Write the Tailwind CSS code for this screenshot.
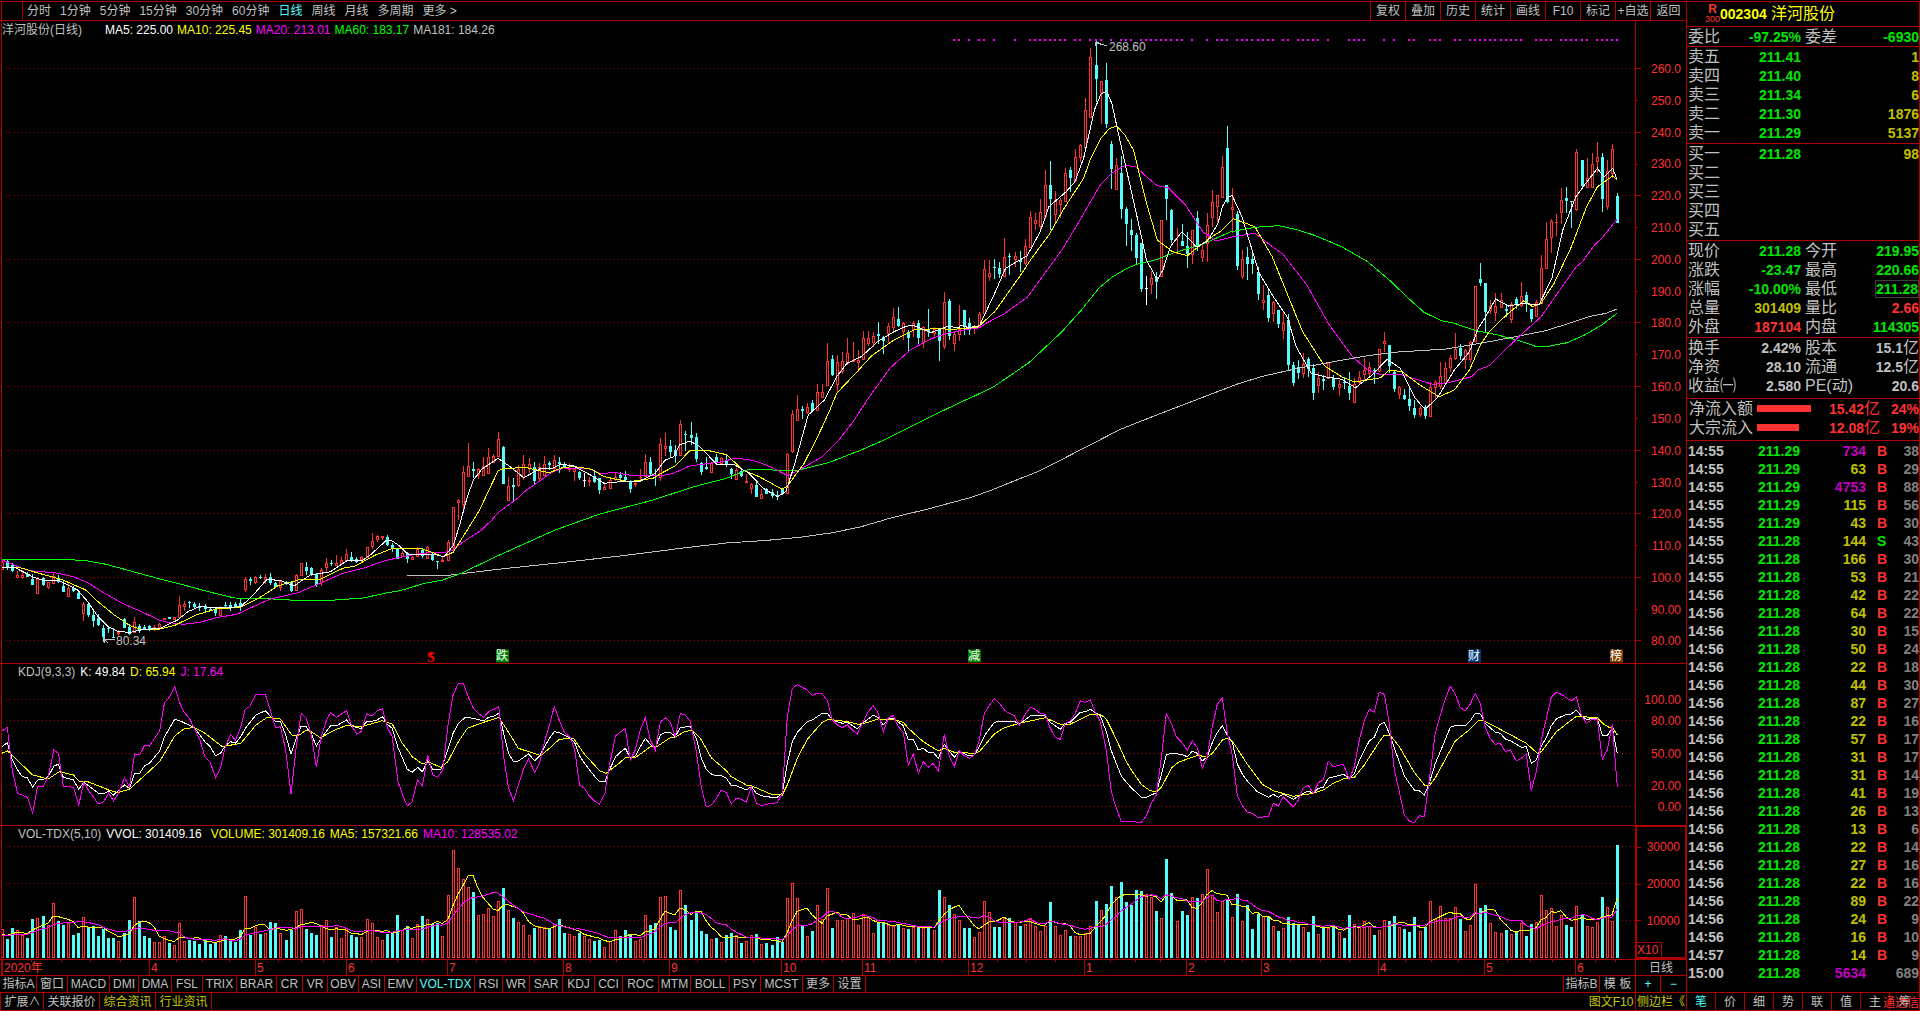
<!DOCTYPE html>
<html lang="zh-CN">
<head>
<meta charset="utf-8">
<meta name="viewport" content="width=device-width, initial-scale=1">
<title>洋河股份 日线</title>
<script src="https://cdn.jsdelivr.net/npm/@tailwindcss/browser@4"></script>
</head>
<body class="bg-black text-[#c0c0c0] font-['Liberation_Sans','Noto_Sans_CJK_SC',sans-serif] text-xs leading-none">
<div class="flex min-h-screen w-full pt-px">

  <!-- chart area -->
  <main class="flex min-w-0 flex-1 flex-col whitespace-nowrap">
    <nav class="flex h-5 items-stretch justify-between border-y border-[#b00000]" aria-label="周期">
      <div class="flex">
        <div class="ml-px w-[22px] border-x border-[#b00000]"></div>
        <div class="flex items-center gap-[9px] pl-1">
          <button>分时</button><button>1分钟</button><button>5分钟</button><button>15分钟</button><button>30分钟</button><button>60分钟</button><button class="text-[#54fcfc]">日线</button><button>周线</button><button>月线</button><button>多周期</button><button>更多 &gt;</button>
        </div>
      </div>
      <div class="grid w-[316px] grid-cols-[repeat(8,35px)_1fr] [&>button]:border-l [&>button]:border-[#b00000]">
        <button>复权</button><button>叠加</button><button>历史</button><button>统计</button><button>画线</button><button>F10</button><button>标记</button><button>+自选</button><button>返回</button>
      </div>
    </nav>

    <section class="flex min-h-80 flex-1">
      <div class="relative ml-px min-w-0 flex-1 border-l border-[#b00000]">
        <svg id="price" class="absolute inset-0 h-full w-full" viewBox="2 21 1633 642" preserveAspectRatio="none" shape-rendering="crispEdges" fill="none"></svg>
        <div id="priceMarks"></div>
        <div class="relative flex gap-1 pt-[3px]">
          <span class="w-[99px]">洋河股份(日线)</span>
          <span class="text-white">MA5: 225.00</span><span class="text-[#ffff00]">MA10: 225.45</span><span class="text-[#ff00ff]">MA20: 213.01</span><span class="text-[#00ff00]">MA60: 183.17</span><span>MA181: 184.26</span>
        </div>
      </div>
      <div id="priceAxis" class="relative w-[51px] border-l border-[#b00000] text-[#ff3232]"></div>
    </section>

    <section class="flex h-[162px] border-t border-[#b00000]">
      <div class="relative ml-px min-w-0 flex-1 border-l border-[#b00000]">
        <svg id="kdj" class="absolute inset-0 h-full w-full" viewBox="2 664 1633 161" preserveAspectRatio="none" shape-rendering="crispEdges" fill="none"></svg>
        <div class="relative flex gap-[5px] pl-4 pt-[2px]">
          <span>KDJ(9,3,3)</span><span class="text-white">K: 49.84</span><span class="text-[#ffff00]">D: 65.94</span><span class="text-[#ff00ff]">J: 17.64</span>
        </div>
      </div>
      <div id="kdjAxis" class="relative w-[51px] border-l border-[#b00000] text-[#ff3232]"></div>
    </section>

    <section class="flex h-[134px] border-t border-[#b00000]">
      <div class="relative ml-px min-w-0 flex-1 border-l border-[#b00000]">
        <svg id="vol" class="absolute inset-0 h-full w-full" viewBox="2 826 1633 133" preserveAspectRatio="none" shape-rendering="crispEdges" fill="none"></svg>
        <div class="relative flex gap-[5px] pl-4 pt-[2px]">
          <span>VOL-TDX(5,10)</span><span class="text-white">VVOL: 301409.16</span><span class="pl-1 text-[#ffff00]">VOLUME: 301409.16</span><span class="text-[#ffff00]">MA5: 157321.66</span><span class="text-[#ff00ff]">MA10: 128535.02</span>
        </div>
      </div>
      <div id="volAxis" class="relative w-[51px] border-2 border-r border-t-1 border-[#b00000] text-[#ff3232]">
        <span class="absolute bottom-0 left-0 border-r border-t border-[#b00000] pb-px pr-[3px] pt-px">X10</span>
      </div>
    </section>

    <div class="flex h-4 border-t border-[#b00000]">
      <div id="dates" class="relative ml-px min-w-0 flex-1 border-l border-[#b00000] text-[#ff3232]"></div>
      <button class="w-[51px] border-l border-[#b00000]">日线</button>
    </div>

    <nav class="flex h-[17px] border-t border-[#b00000]" aria-label="指标">
      <div id="indicators" class="flex min-w-0 flex-1 pl-px"></div>
      <div class="flex [&>button]:border-l [&>button]:border-[#b00000]">
        <button class="w-9">指标B</button><button class="w-9">模 板</button><button class="w-[25px] text-[#54fcfc]">+</button><button class="w-[26px] text-[#54fcfc]">−</button>
      </div>
    </nav>

    <nav class="flex h-[19px] justify-between border-y border-[#b00000]" aria-label="资讯">
      <div class="flex border-l border-[#b00000] pl-px [&>button]:border-r [&>button]:border-[#b00000]">
        <button class="w-[42px]">扩展∧</button><button class="w-14">关联报价</button><button class="w-14 text-[#c8c800]">综合资讯</button><button class="w-14 text-[#c8c800]">行业资讯</button>
      </div>
      <div class="flex text-[#c8c800]">
        <button class="w-12">图文F10</button><button class="w-[51px] overflow-hidden border-l border-[#b00000] pl-px text-left">侧边栏《</button>
      </div>
    </nav>
  </main>

  <!-- quote panel -->
  <aside class="flex w-[234px] flex-col border border-[#b00000] text-sm leading-none font-bold">
    <header class="flex h-6 items-center pl-[18px] text-[#ffff00]">
      <div class="flex w-[15px] flex-col items-center text-[#ff3232]"><span class="text-xs leading-[11px]">R</span><span class="text-[9px] leading-[9px] font-normal">300</span></div>
      <span class="w-[51px]">002304</span><h1 class="text-base leading-none font-normal">洋河股份</h1>
    </header>
    <div id="quotes"></div>
    <section class="border-t border-[#b00000] pb-[3px] text-[#ff3232]">
      <div class="flex h-[19px] items-center pl-[2px]"><span class="w-[68px] text-base leading-none font-normal text-[#c0c0c0]">净流入额</span><span class="h-[7px] w-[54px] bg-[#ff3232]"></span><span class="ml-auto">15.42<span class="text-base leading-none font-normal">亿</span></span><span class="w-[39px] text-right">24%</span></div>
      <div class="flex h-[19px] items-center pl-[2px]"><span class="w-[68px] text-base leading-none font-normal text-[#c0c0c0]">大宗流入</span><span class="h-[7px] w-[42px] bg-[#ff3232]"></span><span class="ml-auto">12.08<span class="text-base leading-none font-normal">亿</span></span><span class="w-[39px] text-right">19%</span></div>
    </section>
    <div class="flex-1 border-t border-[#b00000] pt-px">
      <table class="w-full table-fixed">
        <colgroup><col class="w-[50px]"><col class="w-[63px]"><col class="w-[66px]"><col class="w-[24px]"><col></colgroup>
        <tbody id="ticks"></tbody>
      </table>
    </div>
    <nav class="relative grid h-[18px] grid-cols-[28px_repeat(6,29px)_1fr] border-t border-[#b00000] text-xs leading-none font-normal [&>button+button]:border-l [&>button+button]:border-[#b00000]" aria-label="明细">
      <button class="text-[#54fcfc]">笔</button><button>价</button><button>细</button><button>势</button><button>联</button><button>值</button><button>主</button><button>筹</button>
      <a href="#" class="absolute bottom-px right-0 text-[#ff3232]">通达信</a>
    </nav>
  </aside>
</div>

<script>
const RED = '#ff3232', CYAN = '#54fcfc', LINE = '#b00000';
const $ = id => document.getElementById(id);
const COUNT = 320, STEP = 1615 / 319;
const barX = i => Math.round(2.5 + i * STEP - .5);

// Candles: colour (r rise, c fall, w flat), high, low, body top, body bottom in thirds of a pixel below y
const candleData = [
 {y:480, d:`r238,270,245,268 c240,270,243,262 c250,277,255,274 r272,292,285,290 r270,297,286,290 c276,290,283,290 c283,316,297,315 r290,340,296,338 c290,317,295,315 r305,328,307,320 r277,312,288,310 c285,310,295,305 c300,336,318,335 r310,350,325,349 c318,335,325,332 c335,357,340,356 r365,422,372,398 c368,410,372,405 c388,440,406,424 c403,437,415,435 c435,485,445,472 c438,458,443,448 c445,473,471,473 r450,468,455,458 c415,445,418,443 c432,465,440,462 r412,460,426,455 c432,460,437,452 c435,450,440,447 c434,452,438,448 r436,452,442,448 r430,445,432,440 r413,420,415,418 c410,418,412,417 r410,418,412,417 r348,413,375,412 r364,392,372,378 c362,385,366,370 c367,383,373,380 c370,394,378,384 c372,397,380,386 c384,392,386,390 c385,408,388,400 r377,408,380,405 c365,380,374,378 c366,392,375,380 c365,385,372,380 c358,393,368,382 r290,337,298,328 c290,315,298,302 r287,312,290,307 c285,297,291,295 r283,312,292,296 c280,315,290,310 c305,323,308,321 r300,333,303,320 c303,315,307,310 c302,335,307,332 r283,332,286,330 r248,288,250,284 c245,285,262,272 c262,288,265,282 c278,320,282,316 r265,318,270,305 r235,275,248,262 c240,258,250,253 r225,258,250,254 r232,252,240,248 r207,245,222,240 c216,245,230,242 c230,248,236,245 r228,245,232,238 r200,235,202,232 r158,207,182,198 r165,185,168,178 r168,180,169,172 c165,198,170,195 c188,215,196,206 c204,237,206,236`},
 {y:300, d:`r752,772,758,768 c755,790,758,778 r768,780,770,776 r740,770,748,768 c745,775,750,768 r737,777,740,775 c758,783,765,780 c783,808,783,786 r770,785,781,784 r720,782,726,780 r620,752,622,740 r597,660,600,605 r497,632,517,612 r430,530,498,528 c487,535,506,512 r503,537,507,522 r470,527,497,525 r445,520,470,518 r463,488,468,485 r395,470,418,468 c437,552,440,551 r532,603,558,601 c535,607,555,560 r495,560,508,555 r465,540,492,530 r475,520,492,505 c487,555,500,542 r490,545,502,533 r468,527,492,525 c482,510,490,495 r465,510,480,505 c470,520,485,492 c487,505,493,500 r490,515,503,508 r503,543,508,512 c512,540,516,535 w520,560,540,541 r530,558,540,542 c515,550,528,545 c533,583,535,570 r545,570,562,567 r537,567,540,563 r520,543,530,538 c515,540,526,535 c512,547,530,540 c540,580,545,568 r545,560,548,553 r507,545,530,532 r463,530,487,527 c472,527,487,522 c507,558,525,528 r415,543,432,530 r400,467,438,445 c420,470,438,455 c435,488,450,467 r360,467,373,466 c392,452,403,405 c367,435,405,415 c400,487,411,478 c487,525,490,517 c470,510,500,507 r487,520,490,517 c463,490,470,487 r470,492,475,488 c463,502,480,496 c503,537,507,521 r505,537,510,536 c510,530,513,527 r522,550,543,545 r548,582,552,565 c543,590,555,590 r568,595,582,593 c563,583,567,582 c568,595,577,588 c573,600,585,588 c563,585,567,583 r458,583,461,580 r330,458,343,452 r285,362,328,360 c318,357,328,332 r308,342,322,335 c300,335,310,332 r252,333,277,330 r252,295,277,290 r128,255,184,254 c165,228,177,225 r165,275,187,252 r155,222,184,213 r113,195,160,190 r127,187,180,184 r150,215,180,187 r93,180,115,178 r93,138,115,128 r97,140,107,127 c67,133,102,108 c107,162,112,123 r70,127,78,98 r23,97,52,80 c22,80,57,77 r67,120,70,92 c90,153,97,115 r63,110,70,88 c60,132,69,113 r78,145,82,125 c28,112,88,95 r82,115,87,100 c87,182,90,122 r-25,147,7,137 c-2,120,2,107 r95,152,102,130 r15,122,88,103`},
 {y:30, d:`c840,915,840,892 c865,915,880,897 r885,912,888,895 r845,890,853,885 r690,852,717,850 r690,752,730,738 c687,748,711,714 c695,743,713,732 r625,740,682,738 c668,735,678,681 r665,712,678,688 c662,725,690,697 r628,705,648,700 r543,655,560,650 r550,600,570,578 r507,598,545,587 r420,567,466,558 c393,600,465,507 r483,575,510,553 r503,563,510,522 r413,515,430,512 c412,487,420,443 r357,455,382,450 r343,395,346,382 r205,360,241,350 r53,265,82,260 c30,215,105,147 r153,282,154,185 c98,293,150,282 c333,477,342,417 r383,480,406,478 c378,567,430,537 c532,648,537,582 c567,662,600,615 c610,703,615,683 c640,787,640,777 w737,825,775,776 r723,792,745,763 c727,808,742,755 r570,738,571,737 c465,570,465,507 c537,640,540,630 r595,672,668,670 c583,645,633,648 c605,713,648,672 r600,703,601,673 c543,662,563,650 r640,697,660,682 r550,697,586,640 r480,592,517,560 r495,577,496,527 r378,505,412,502 c288,520,354,515 r473,608,532,536 c543,720,552,708 r660,748,688,737 c650,750,682,702 c670,732,688,702 c710,810,725,792 r765,840,810,815 c778,877,795,863 r813,875,817,848 c840,895,840,882 r843,927,880,900 c853,1020,870,1005 c997,1068,1005,1058 c990,1048,1010,1030 r968,1045,1002,1030 c980,1040,987,1018 c1003,1110,1013,1088 r1027,1090,1043,1065 c1035,1080,1048,1053 r995,1047,1000,1043 c1035,1080,1043,1072 r1050,1097,1063,1070 c1040,1077,1055,1060 c1027,1110,1067,1088 r1045,1118,1062,1115 r1022,1065,1040,1055 r983,1050,1020,1032 r995,1037,1010,1030 c1015,1062,1020,1023 r957,1025,958,1022 r907,967,934,938 c945,1030,946,1008 c1020,1087,1025,1077 r1067,1107,1070,1092 c1078,1110,1095,1107 c1075,1143,1107,1128 c1110,1163,1133,1155 r1127,1160,1135,1153 c1125,1167,1130,1157 r1057,1160,1070,1158 r1050,1108,1055,1070 r997,1077,1038,1068 r995,1065,1015,1060 r975,1027,984,1010 r908,990,958,985 c943,990,953,978 r957,1017,960,987 r933,997,937,986 r767,935,769,933 c698,767,747,760 c760,907,760,847 r810,853,827,840 r790,873,828,845 r790,835,810,832 c822,860,838,842 r817,880,823,867 c800,837,808,822 r757,832,798,825 c785,845,795,818 c837,875,838,867 r810,858,815,857 r675,820,715,818 r575,715,628,713 r567,668,574,620 r553,617,575,577 r473,582,511,545 c470,548,505,513 c513,595,513,515 r357,543,367,536 c390,477,390,468 r383,472,445,470 r370,475,402,472 r337,430,382,392 c370,547,380,507 r390,540,422,527 r343,445,358,430 c490,578,498,578`}
];
const candles = candleData.flatMap(s => s.d.split(' ').map(t => {
  const [h, l, a, b] = t.slice(1).split(',').map(v => Math.round(s.y + v / 3));
  return {c: t[0], h, l, a, b};
}));

// Volume bar tops, in thirds of a pixel below y
const volData = [
 {y:820, d:'328 357 324 331 345 353 297 295 289 315 250 303 315 308 346 340 292 322 318 348 327 354 354 362 338 300 232 303 349 354 367 367 349 369 376 310 364 360 363 372 360 373 370 346 348 360 367 331 229 344 320 342 340 306 309 340 360 331 274 268 328 339 346 316 300 351 320 354 325 346 351 352 297 310 352 361 342 338 285 330 318 354 312 288 297 312 309 349 226 91 145 178 202 216 286 283 265 289 244 204 271 293 307 316 346 324 318 322 328 313 297 340 342 348 338 347 357 362 360 381 363 331'},
 {y:670, d:'798 780 793 814 808 736 765 759 682 679 771 780 661 705 750 727 783 792 808 804 817 795 789 796 819 814 796 792 823 819 825 801 816 685 640 685 768 799 783 706 748 655 774 750 750 745 730 766 733 742 790 760 760 765 768 762 775 777 772 772 775 775 780 660 682 705 733 750 774 774 802 787 694 727 771 771 745 744 757 768 763 745 769 784 768 696 768 796 781 798 799 799 790 769 693 721 702 648 682 636 696'},
 {y:640, d:'795 750 753 763 772 813 835 657 759 844 813 825 772 774 763 688 766 817 784 777 832 762 844 795 867 822 829 828 859 873 865 831 849 856 862 876 828 883 865 865 856 877 894 825 853 862 844 858 885 871 841 843 828 862 867 876 831 874 862 784 838 799 835 835 802 837 874 856 733 804 795 850 877 880 870 883 877 850 888 852 847 766 811 805 859 826 855 861 799 822 859 862 847 771 802 844 615'}
];
const vols = volData.flatMap(s => s.d.split(' ').map(v => Math.round(s.y + v / 3)));

// Curves: x, y pairs relative to a block origin; k is the block's horizontal resolution
const A = {x:0, y:480, k:2.45}, B = {x:400, y:300, k:2.45}, C = {x:960, y:30, k:2.306}, D = {x:620, y:670, k:3}, E = {x:1130, y:640, k:3};
const curve = (color, ...parts) => {
  let pts = [];
  for (let i = 0; i < parts.length; i += 2) {
    const o = parts[i];
    pts.push(...parts[i + 1].split(' ').map(p => { const [x, y] = p.split(','); return (o.x + x / o.k).toFixed(1) + ',' + (o.y + y / 3).toFixed(1); }));
  }
  return `<polyline points="${pts.join(' ')}" stroke="${color}"/>`;
};
const grid = ys => ys.map(y => `<path d="M6 ${y + .5}H1635" stroke="${LINE}" stroke-dasharray="1 3"/>`).join('');
const solid = (x, y, w, h, f) => `<rect x="${x}" y="${y}" width="${w}" height="${Math.max(1, h)}" fill="${f}"/>`;
const hollow = (x, y, w, h) => h < 3 ? solid(x, y, w, h, RED) : `<rect x="${x + .5}" y="${y + .5}" width="${w - 1}" height="${h - 1}" stroke="${RED}" fill="#000"/>`;

const gridPrice = [68, 132, 195, 259, 322, 386, 450, 513, 577, 640];
let out = grid(gridPrice);
candles.forEach((k, i) => {
  const x = barX(i), col = k.c === 'r' ? RED : k.c === 'c' ? CYAN : '#fff';
  out += solid(x, k.h, 1, k.l - k.h, col);
  if (k.c === 'r') out += hollow(x - 1, k.a, 3, k.b - k.a + 1);
  else if (k.c === 'c') out += solid(x - 1, k.a, 3, k.b - k.a, col);
  else out += solid(x - 1, k.a, 3, 1, col);
});
out += curve('#c0c0c0', B, '18,827 110,827 240,808 380,790 540,768 700,743 800,729 900,721 980,712 1060,698 1130,680 1200,655 1300,625 1400,592 1450,570 1500,545 1568,512', C, '370,1198 440,1162 500,1132 560,1102 640,1062 700,1038 780,1015 870,993 940,977 1000,967 1120,957 1200,940 1290,918 1350,902 1400,882 1450,860 1490,850 1515,837');
out += curve('#00ff00', A, '5,238 160,238 215,243 260,253 300,266 380,293 450,315 520,338 575,354 640,355 710,360 820,360 890,354 950,338', B, '0,872 60,850 105,840 150,820 240,767 380,690 490,642 620,600 720,560 800,535 850,510 900,508 935,513 975,511 1050,488 1130,450 1190,418 1300,350', C, '1,1117 30,1100 78,1070 120,1033 160,997 235,905 280,840 320,775 350,742 385,715 410,702 450,690 490,670 560,642 625,605 680,592 735,587 780,600 820,617 880,650 940,695 990,750 1030,800 1070,847 1110,872 1140,880 1190,902 1240,915 1290,932 1325,948 1360,948 1400,938 1440,915 1480,885 1515,850');
out += curve('#ff00ff', A, '5,240 60,268 90,275 130,277 180,290 215,308 250,335 300,370 350,397 390,420 410,427 450,433 490,427 530,413 580,403 620,380 660,358 730,338 780,312 840,280 890,265 940,243', B, '0,772 40,763 75,757 110,757 130,750 150,730 200,690 225,660 240,638 285,598 310,570 340,545 370,518 400,504 460,505 490,520 530,518 570,527 640,527 670,520 710,498 790,485 820,475 850,478 880,487 910,502 950,527 985,505 1035,470 1075,420 1110,365 1150,290 1200,205 1250,150 1300,117 1340,100', C, '1,902 45,893 60,880 100,853 155,802 235,660 270,585 300,517 325,462 350,430 380,406 405,410 430,440 455,467 480,473 520,525 560,605 590,633 630,620 680,610 715,645 745,673 770,715 800,765 850,882 905,980 940,1020 965,1032 1020,1035 1090,1063 1120,1060 1180,1040 1195,1020 1220,1007 1285,925 1340,860 1420,712 1435,695 1465,642 1480,625 1515,568');
out += curve('#ffff00', A, '5,262 50,263 90,278 150,298 210,330 240,365 280,405 320,438 350,450 390,448 430,435 480,405 530,387 590,382 640,350 680,318 730,300 785,298 840,265 870,258 920,225 960,206', B, '0,744 45,744 75,755 105,770 130,757 165,690 195,630 220,565 240,513 255,505 310,503 365,518 400,502 430,500 470,508 500,530 560,545 620,535 640,520 675,497 710,452 750,450 800,464 840,510 880,530 935,567 948,560 990,490 1015,430 1035,380 1055,325 1070,280 1120,215 1155,168 1210,120 1260,90 1310,86 1360,88', C, '1,895 40,893 80,845 140,735 165,685 205,615 240,535 285,445 300,390 325,325 345,295 362,289 380,315 400,360 430,520 455,630 490,665 525,677 545,655 590,612 600,605 630,566 680,590 720,680 790,905 840,1007 880,1040 910,1056 970,1043 990,1020 1020,1025 1060,1065 1105,1100 1140,1080 1175,1020 1200,945 1220,905 1260,855 1300,812 1320,830 1340,820 1370,760 1410,650 1445,530 1470,470 1505,438 1515,448');
out += curve('#ffffff', A, '5,263 35,262 85,293 110,303 145,302 190,330 215,365 240,410 265,440 290,455 320,457 350,448 390,446 435,420 460,395 490,379 530,384 590,380 620,345 655,297 690,303 720,318 760,285 810,275 850,242 890,240 910,222 945,183 960,182 978,197', B, '18,762 50,763 80,762 108,770 130,737 145,680 165,590 180,540 200,508 240,475 270,500 303,533 345,505 370,507 395,492 425,498 470,527 500,550 555,543 590,543 625,520 650,480 670,470 685,435 710,423 735,440 775,492 820,495 855,520 890,565 925,590 945,575 965,500 1000,345 1040,300 1070,230 1095,190 1130,170 1170,125 1210,95 1240,79 1258,76 1300,98 1340,80 1370,82', C, '1,885 20,893 45,887 80,790 105,715 155,677 185,605 205,530 245,485 265,455 285,385 310,240 325,192 338,183 350,220 372,350 410,570 430,690 455,750 468,720 485,650 512,605 545,650 570,635 595,580 605,530 618,500 628,497 650,560 690,730 725,805 755,862 775,950 810,1030 840,1040 880,1048 912,1073 950,1035 985,988 1015,1015 1050,1105 1072,1138 1100,1105 1140,1020 1175,965 1195,895 1210,865 1235,807 1265,828 1300,820 1335,825 1365,745 1390,600 1420,500 1440,465 1470,415 1485,442 1505,415 1515,448');
// dotted strip of bar flags under the header
[[188,188],[189,189],[191,191],[193,194],[196,196],[200,200],[203,210],[212,213],[215,217],[219,219],[221,223],[225,233],[235,235],[238,238],[240,242],[244,251],[253,254],[256,260],[262,262],[266,269],[273,273],[275,275],[278,279],[282,284],[287,288],[290,300],[303,306],[308,313],[315,319]]
  .forEach(([a, b]) => { for (let i = a; i <= b; i++) out += solid(barX(i) - 1, 39, 2, 2, '#ff00ff'); });
// high and low arrows
out += '<path d="M104.500 639.500H115M104.500 636V643M104.500 639.500L108 643M1107 46L1095.500 42.500H1099M1095.500 42V46" stroke="#c0c0c0"/>';
$('price').innerHTML = out;

const pos = (x, y, cls, txt) => `<span class="${cls}" style="left:${(x - 2) / 16.33}%;top:${(y - 21) / 6.42}%">${txt}</span>`;
$('priceMarks').innerHTML =
  pos(116, 641, 'absolute -translate-y-1/2', '80.34') + pos(1109, 47, 'absolute -translate-y-1/2', '268.60') +
  pos(427, 658, "absolute -translate-y-1/2 text-sm leading-none font-bold text-[#ff0000] font-['Liberation_Serif',serif]", 'S') +
  pos(429, 651, 'absolute h-1 w-1 bg-[#ff0000] [clip-path:polygon(50%_0,100%_100%,0_100%)]', '') +
  pos(496, 656, 'absolute size-[13px] -translate-y-1/2 bg-[#008000] text-white', '跌') +
  pos(968, 656, 'absolute size-[13px] -translate-y-1/2 bg-[#008000] text-white', '减') +
  pos(1468, 656, 'absolute size-[13px] -translate-y-1/2 bg-[#003c78] text-white', '财') +
  pos(1610, 656, 'absolute size-[13px] -translate-y-1/2 bg-[#804000] text-white', '榜');

const axis = (id, top, h, list) => {
  $(id).insertAdjacentHTML('beforeend', list.map(([t, y, tick]) => {
    const p = (y - top + .5) / h * 100;
    return `<span class="absolute right-[5px] -translate-y-1/2" style="top:${p}%">${t}</span><i class="absolute left-0 h-px bg-[#b00000]" style="width:${tick}px;top:${(y - top) / h * 100}%"></i>`;
  }).join(''));
};
const priceTicks = [];
for (let v = 260, i = 0; v >= 80; v -= 10, i++) {
  const y = i % 2 ? Math.round((gridPrice[(i - 1) / 2] + gridPrice[(i + 1) / 2]) / 2) : gridPrice[i / 2];
  priceTicks.push([v >= 100 ? v.toFixed(1) : v.toFixed(2), y, i % 2 ? 2 : 5]);
}
axis('priceAxis', 21, 642, priceTicks);
axis('kdjAxis', 664, 161, [['100.00', 699, 0], ['80.00', 720, 0], ['50.00', 753, 0], ['20.00', 785, 0], ['0.00', 806, 0]]);
axis('volAxis', 826, 131, [['30000', 846, 4], ['20000', 883, 4], ['10000', 920, 4]]);

// KDJ
$('kdj').innerHTML = grid([699, 720, 753, 785, 806]) +
 curve('#ffffff', A, '5,800 18,788 30,838 43,870 55,890 67,893 80,922 92,900 106,898 118,890 132,858 143,853 155,892 180,900 193,928 205,907 218,918 241,940 256,940 266,933 278,945 305,915 317,925 330,880 342,880 354,858 366,850 391,813 403,770 428,718 440,722 475,742 490,765 502,785 515,800 528,827 540,820 552,797 565,785 577,790 590,770 601,745 627,705 650,692 675,725 687,725 700,765 713,822 726,775 738,738 750,740 763,762 775,798 787,775 810,737 825,737 849,720 861,738 885,746 898,725 920,722 937,710 949,733 961,745 975,803 988,840 998,868 1010,877 1023,862 1035,875 1048,843 1060,868 1080,870 1097,810 1110,760 1123,730 1140,712 1160,715 1185,723 1197,712 1210,708 1222,700 1234,760 1246,820 1258,845 1270,843 1295,822 1310,842 1322,828 1334,800 1346,775 1358,755 1370,758 1397,775 1408,788 1420,828 1432,850 1456,888 1469,905 1482,905 1494,868 1508,830', D, '1,247 16,235 31,263 46,258 61,230 76,205 91,223 106,235 121,195 136,187 151,187 166,200 181,172 211,170 229,205 244,265 259,298 274,312 289,317 304,317 319,325 334,346 349,347 379,360 394,350 409,370 424,377 454,382 472,382 487,370 502,280 517,215 532,187 562,155 577,150 607,130 622,130 637,150 667,160 682,157 712,176 727,160 760,136 775,143 790,165 805,147 820,145 850,167 865,210 880,208 895,240 910,235 925,247 940,247 955,265 973,223 988,243 1003,262 1018,243 1048,258 1063,255 1078,230 1093,198 1123,157 1138,154 1183,154 1198,163 1231,138 1276,137 1291,157 1321,178 1336,160 1351,157 1381,127 1396,125 1411,118 1441,137 1459,185 1474,242 1504,318 1519,337', E, '4,443 34,472 49,472 79,458 94,405 109,345 124,340 154,343 172,350 187,334 202,340 217,363 232,350 247,308 262,278 277,257 292,285 307,307 322,372 337,402 352,423 382,455 415,472 430,463 445,472 460,462 490,478 520,460 535,453 550,460 565,445 580,442 595,415 640,403 658,415 673,402 688,360 718,303 733,292 748,255 763,247 778,280 793,325 808,365 823,407 838,430 853,450 868,452 883,465 898,430 916,370 931,335 961,262 976,257 1006,257 1021,243 1036,220 1051,222 1066,250 1096,277 1111,280 1126,297 1141,302 1174,322 1189,320 1204,370 1219,360 1234,318 1249,293 1264,257 1279,237 1309,223 1324,222 1339,211 1354,227 1369,238 1402,235 1417,285 1432,287 1447,263 1462,340') +
 curve('#ffff00', A, '5,820 18,812 80,885 118,897 145,875 180,885 193,903 215,905 278,935 290,937 317,928 391,845 428,768 450,747 475,742 500,758 545,800 590,790 627,735 655,712 687,717 715,765 730,768 750,750 765,757 785,773 820,750 850,736 885,740 937,722 961,732 985,788 1010,830 1035,852 1048,845 1080,862 1097,845 1123,785 1145,745 1185,727 1222,712 1245,755 1270,805 1325,827 1346,805 1370,778 1405,775 1430,820 1469,872 1485,880 1508,858', D, '1,277 16,263 46,263 91,230 110,230 151,203 166,202 190,187 215,180 240,203 274,263 319,302 334,320 379,345 394,347 454,373 487,375 502,345 532,265 562,208 607,157 625,148 682,155 715,163 745,157 775,147 820,148 850,157 865,175 910,215 955,243 973,235 1003,247 1063,250 1078,245 1123,192 1153,173 1198,160 1276,143 1321,163 1350,163 1411,133 1440,132 1459,147 1489,208 1519,275', E, '4,390 34,433 60,452 80,455 95,440 125,383 145,367 172,357 205,346 232,352 247,340 277,300 290,295 307,303 350,370 397,433 430,452 490,469 550,460 580,450 610,430 645,415 673,412 703,375 748,305 763,285 780,285 808,320 853,397 885,437 900,435 916,413 976,303 1021,267 1045,243 1060,242 1096,260 1189,310 1222,340 1234,335 1279,275 1339,229 1402,233 1420,252 1437,262 1447,262 1462,285') +
 curve('#ff00ff', A, '5,753 18,742 30,870 43,940 67,952 80,998 92,918 106,918 118,890 132,810 143,820 155,918 180,922 193,975 205,908 218,933 241,972 254,965 266,940 278,962 290,940 305,893 317,920 330,822 342,825 354,797 366,798 391,753 403,668 416,650 428,619 440,668 452,698 464,715 490,780 502,830 515,847 528,893 540,865 552,800 565,764 577,780 590,740 601,688 613,678 627,643 650,643 662,690 675,744 687,740 700,810 713,943 726,800 738,700 750,714 763,765 775,862 787,770 800,720 810,698 825,712 849,692 861,735 874,762 885,755 898,702 912,708 925,692 937,686 949,742 961,770 975,905 988,950 998,978 1010,965 1023,900 1035,918 1048,825 1060,885 1072,892 1085,870 1097,740 1110,645 1123,610 1135,610 1147,650 1160,686 1172,700 1185,712 1197,695 1210,688 1222,680 1234,830 1246,925 1258,962 1270,915 1283,865 1295,837 1310,877 1322,850 1334,785 1346,735 1358,680 1370,720 1383,758 1397,772 1408,810 1420,915 1432,925 1444,948 1456,963 1469,972 1482,940 1494,850 1508,768', D, '1,186 16,176 31,270 46,240 61,180 76,143 91,210 106,240 121,157 136,143 151,157 166,200 181,130 196,135 211,155 229,245 244,350 259,411 274,405 289,385 304,360 319,368 334,402 349,385 364,388 379,397 394,352 409,400 424,407 439,403 472,398 487,370 502,140 517,55 532,44 562,60 577,76 592,70 607,71 622,92 637,150 652,165 667,173 682,165 697,180 712,192 727,160 745,125 760,107 775,130 790,187 805,143 820,137 835,170 850,187 865,285 880,252 895,310 910,275 925,292 940,280 955,303 973,193 988,260 1003,290 1018,243 1033,257 1048,265 1063,255 1078,210 1093,130 1108,107 1123,85 1138,100 1153,120 1168,130 1183,137 1198,165 1216,133 1231,112 1246,118 1261,130 1276,133 1291,175 1306,202 1321,208 1336,160 1351,153 1366,130 1381,92 1396,97 1411,90 1426,127 1441,155 1459,240 1474,365 1489,415 1504,455 1530,455', E, '4,545 34,547 49,527 64,490 79,465 94,355 109,220 124,250 139,290 154,305 172,331 187,303 202,322 217,385 232,350 247,260 262,193 277,173 292,280 307,345 322,467 337,497 352,517 367,520 382,532 415,530 430,490 445,498 460,470 475,485 490,500 505,480 520,443 535,436 550,460 565,428 580,420 595,364 610,380 640,373 658,418 673,380 688,300 703,243 718,208 733,217 748,157 763,163 778,250 793,390 808,455 823,525 838,543 853,548 868,527 883,530 898,420 916,280 931,225 946,177 961,139 976,163 991,203 1006,212 1021,192 1036,160 1051,190 1066,263 1081,295 1096,313 1111,310 1126,335 1141,330 1159,362 1174,355 1189,342 1204,452 1219,395 1234,300 1249,235 1264,172 1279,157 1294,163 1324,183 1339,170 1354,225 1369,250 1384,240 1402,237 1417,357 1432,330 1447,253 1462,440');

// Volume bars with their moving averages
const average = (n, color) => `<polyline stroke="${color}" points="${vols.map((_, i) => {
  const w = vols.slice(Math.max(0, i - n + 1), i + 1);
  if (i < n - 1) w.push(...Array(n - w.length).fill(936));
  return barX(i) + ',' + (w.reduce((a, b) => a + b) / w.length).toFixed(1);
}).join(' ')}"/>`;
$('vol').innerHTML = grid([846, 883, 920]) + vols.map((t, i) =>
  candles[i].c === 'c' ? solid(barX(i) - 1, t, 3, 958 - t, CYAN) : hollow(barX(i) - 1, t, 3, 958 - t)).join('') +
  average(5, '#ffff00') + average(10, '#ff00ff');

// Date axis
const months = [[2, '2020年'], [149, '4'], [255, '5'], [346, '6'], [447, '7'], [563, '8'], [669, '9'], [781, '10'], [862, '11'], [968, '12'], [1084, '1'], [1186, '2'], [1261, '3'], [1378, '4'], [1484, '5'], [1575, '6'], [1655, '']];
let d = '';
months.slice(0, -1).forEach(([x, t], i) => {
  d += `<span class="absolute inset-y-0 flex items-center border-l border-[#b00000] pl-px" style="left:${(x - 2) / 16.33}%">${t}</span>`;
  const nx = months[i + 1][0], n = i ? 4 : 5;
  for (let j = 1; j < n; j++) { const mx = x + (nx - x) * j / n; if (mx < 1620) d += `<i class="absolute top-0 h-0.5 w-px bg-[#b00000]" style="left:${(mx - 2) / 16.33}%"></i>`; }
});
$('dates').innerHTML = d;

// Indicator tabs with their widths
$('indicators').innerHTML = [['指标A', 36], ['窗口', 31], ['MACD', 42], ['DMI', 29], ['DMA', 33], ['FSL', 31], ['TRIX', 34], ['BRAR', 40], ['CR', 26], ['VR', 25], ['OBV', 31], ['ASI', 26], ['EMV', 32], ['VOL-TDX', 58], ['RSI', 28], ['WR', 27], ['SAR', 33], ['KDJ', 32], ['CCI', 28], ['ROC', 36], ['MTM', 32], ['BOLL', 39], ['PSY', 31], ['MCST', 42], ['更多', 31], ['设置', 32]]
  .map(([t, w]) => `<button class="shrink-0 border-r border-[#b00000] ${t === 'VOL-TDX' ? 'text-[#54fcfc]' : ''}" style="width:${w}px">${t}</button>`).join('');

// Quote rows
const tone = {g: 'text-[#00e600]', y: 'text-[#c0c000]', r: 'text-[#ff3232]', w: 'text-[#c0c0c0]', m: 'text-[#c000c0]'};
const yi = s => s.replace('亿', '<span class="text-base leading-none font-normal">亿</span>');
const cell = (label, val, t, edge) => `<div class="flex items-center justify-between ${edge}"><span class="text-base leading-none font-normal">${label}</span><span class="${tone[t] || ''}">${yi(val)}</span></div>`;
const block = (rows, pad = 'pb-px') => `<section class="border-t border-[#b00000] ${pad}">${rows.map(r => `<div class="grid h-[19px] grid-cols-[114px_1fr]">${cell(r[0], r[1], r[2], 'pl-px')}${cell(r[3], r[4], r[5], 'pl-1')}</div>`).join('')}</section>`;
$('quotes').innerHTML =
  block([['委比', '-97.25%', 'g', '委差', '-6930', 'g']], 'pb-0') +
  block([['卖五', '211.41', 'g', '', '1', 'y'], ['卖四', '211.40', 'g', '', '8', 'y'], ['卖三', '211.34', 'g', '', '6', 'y'], ['卖二', '211.30', 'g', '', '1876', 'y'], ['卖一', '211.29', 'g', '', '5137', 'y']]) +
  block([['买一', '211.28', 'g', '', '98', 'y'], ['买二', '', '', '', '', ''], ['买三', '', '', '', '', ''], ['买四', '', '', '', '', ''], ['买五', '', '', '', '', '']]) +
  block([['现价', '211.28', 'g', '今开', '219.95', 'g'], ['涨跌', '-23.47', 'g', '最高', '220.66', 'g'], ['涨幅', '-10.00%', 'g', '最低', '<span class="border border-[#404040]">211.28</span>', 'g'], ['总量', '301409', 'y', '量比', '2.66', 'r'], ['外盘', '187104', 'r', '内盘', '114305', 'g']]) +
  block([['换手', '2.42%', 'w', '股本', '15.1亿', 'w'], ['净资', '28.10', 'w', '流通', '12.5亿', 'w'], ['收益㈠', '2.580', 'w', 'PE(动)', '20.6', 'w']], 'pb-[3px]');

// Tick list: time, price, volume, side, trades
$('ticks').innerHTML = `14:55 29 734 B 38|14:55 29 63 B 29|14:55 29 4753 B 88|14:55 29 115 B 56|14:55 29 43 B 30|14:55 28 144 S 43|14:55 28 166 B 30|14:55 28 53 B 21|14:56 28 42 B 22|14:56 28 64 B 22|14:56 28 30 B 15|14:56 28 50 B 24|14:56 28 22 B 18|14:56 28 44 B 30|14:56 28 87 B 27|14:56 28 22 B 16|14:56 28 57 B 17|14:56 28 31 B 17|14:56 28 31 B 14|14:56 28 41 B 19|14:56 28 26 B 13|14:56 28 13 B 6|14:56 28 22 B 14|14:56 28 27 B 16|14:56 28 22 B 16|14:56 28 89 B 22|14:56 28 24 B 9|14:56 28 16 B 10|14:57 28 14 B 9|15:00 28 5634 _ 689`
  .split('|').map(r => { const [t, p, v, s, n] = r.split(' ');
    return `<tr class="h-[18px]"><td class="pl-px">${t}</td><td class="text-right text-[#00e600]">211.${p}</td><td class="text-right ${v > 500 ? tone.m : tone.y}">${v}</td><td class="pl-[11px] ${s === 'S' ? tone.g : tone.r}">${s === '_' ? '' : s}</td><td class="text-right text-[#808080]">${n}</td></tr>`; }).join('');
</script>
</body>
</html>
